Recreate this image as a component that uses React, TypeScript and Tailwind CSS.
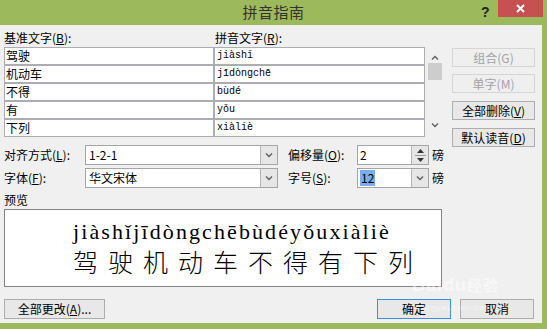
import React from "react";

const ui = { fontFamily: '"Noto Sans CJK SC", "Noto Sans", sans-serif' };
const mono = { fontFamily: '"Liberation Mono", "DejaVu Sans Mono", monospace' };

const rows = [
    ["驾驶", "jiàshǐ"],
    ["机动车", "jīdòngchē"],
    ["不得", "bùdé"],
    ["有", "yǒu"],
    ["下列", "xiàliè"],
];

const chars = ["驾", "驶", "机", "动", "车", "不", "得", "有", "下", "列"];

function Chevron({ up = false, color = "#606060" }: { up?: boolean; color?: string }) {
    return (
        <svg width="8" height="5" viewBox="0 0 8 5">
            <path d={up ? "M1 4.5 L4 1.5 L7 4.5" : "M1 0.5 L4 3.5 L7 0.5"} fill="none" stroke={color} strokeWidth="1.4" />
        </svg>
    );
}

function Btn({ label, keyChar, after = "", disabled = false, primary = false, w = "w-[83px]", h = "h-[19px]" }: { label: string; keyChar: string; after?: string; disabled?: boolean; primary?: boolean; w?: string; h?: string }) {
    return (
        <div className={`${w} ${h} flex items-center justify-center text-[12px] leading-[16px] border ${disabled ? "border-[#d5d5d5] text-[#a3a3a3] bg-[#efefef]" : primary ? "border-[#3c8ce0] bg-[#e8e8e8] text-black" : "border-[#adadad] bg-[#e8e8e8] text-black"}`}>
            {label}
            {keyChar && <>(<span className={disabled ? "" : "underline"}>{keyChar}</span>){after}</>}
        </div>
    );
}

function Combo({ value, w, selected = false }: { value: string; w: string; selected?: boolean }) {
    return (
        <div className={`${w} h-[20px] flex border border-[#a5a5a5] bg-white`}>
            <div className="flex-1 flex items-center pl-[2px] text-[12px] leading-[16px]">
                <span className={selected ? "bg-[#78aeea] px-[1px]" : "px-[1px]"}>{value}</span>
            </div>
            <div className="w-[17px] border-l border-[#b5b5b5] bg-[#e6e6e6] flex items-center justify-center">
                <Chevron />
            </div>
        </div>
    );
}

export default function App() {
    return (
        <div className="w-[547px] h-[329px] bg-[#9cba5b] flex flex-col overflow-hidden text-black" style={ui}>
            {/* title bar */}
            <div className="relative h-[25px] shrink-0 flex items-center justify-center">
                <span className="text-[15px] leading-[20px] text-[#333] tracking-[0.5px] -mt-[1px]">拼音指南</span>
                <span className="absolute left-[481px] top-[2px] text-[14px] font-bold text-[#222]" style={{ fontFamily: '"Liberation Sans", sans-serif' }}>?</span>
                <div className="absolute left-[498px] top-0 w-[45px] h-[17px] bg-[#c75050] flex items-center justify-center">
                    <svg width="9" height="9" viewBox="0 0 9 9">
                        <path d="M1 1 L8 8 M8 1 L1 8" stroke="#fff" strokeWidth="2" />
                    </svg>
                </div>
            </div>

            {/* dialog body */}
            <div className="relative mr-[5px] h-[298px] shrink-0 bg-[#f0f0f0] pl-[4px]">
                <div className="flex items-start h-[112px]">
                    <div className="w-[438px]">
                        <div className="h-[22px] pt-[5px] flex text-[12px] leading-[16px]">
                            <span className="w-[211px]">基准文字(<span className="underline">B</span>):</span>
                            <span>拼音文字(<span className="underline">R</span>):</span>
                        </div>
                        <div className="flex">
                            <div className="flex flex-col">
                                {rows.map(([han, py]) => (
                                    <div key={han} className="flex">
                                        <div className="w-[210px] h-[18px] border border-[#abadb3] bg-white pl-[1px] text-[12px] leading-[16px]">{han}</div>
                                        <div className="w-[211px] h-[18px] border border-[#abadb3] bg-white pl-[2px] text-[10px] leading-[16px]" style={mono}>{py}</div>
                                    </div>
                                ))}
                            </div>
                            <div className="ml-[3px] w-[14px] h-[90px] flex flex-col items-center">
                                <div className="h-[16px] flex items-end pb-[3px]"><Chevron up /></div>
                                <div className="w-[14px] h-[17px] bg-[#cdcdcd]" />
                                <div className="flex-1" />
                                <div className="h-[16px] flex items-start pt-[2px]"><Chevron /></div>
                            </div>
                        </div>
                    </div>
                    <div className="ml-[10px] pt-[23px] flex flex-col">
                        <Btn label="组合" keyChar="G" disabled />
                        <div className="mt-[7px]"><Btn label="单字" keyChar="M" disabled /></div>
                        <div className="mt-[8px]"><Btn label="全部删除" keyChar="V" /></div>
                        <div className="mt-[8px]"><Btn label="默认读音" keyChar="D" /></div>
                    </div>
                </div>

                {/* option rows */}
                <div className="mt-[7px] h-[22px] flex items-center text-[12px] leading-[16px]">
                    <span className="w-[81px]">对齐方式(<span className="underline">L</span>):</span>
                    <Combo value="1-2-1" w="w-[193px]" />
                    <span className="ml-[10px] w-[69px]">偏移量(<span className="underline">O</span>):</span>
                    <div className="w-[72px] h-[20px] flex border border-[#a5a5a5] bg-white">
                        <div className="flex-1 pl-[2px] leading-[18px]">2</div>
                        <div className="w-[17px] border-l border-[#b5b5b5] bg-[#e6e6e6] flex flex-col items-center justify-center gap-[2px]">
                            <svg width="7" height="4" viewBox="0 0 7 4"><path d="M0 4 L3.5 0 L7 4 Z" fill="#333" /></svg>
                            <div className="w-[11px] h-px bg-[#9a9a9a]" />
                            <svg width="7" height="4" viewBox="0 0 7 4"><path d="M0 0 L3.5 4 L7 0 Z" fill="#333" /></svg>
                        </div>
                    </div>
                    <span className="ml-[3px]">磅</span>
                </div>
                <div className="mt-px h-[22px] flex items-center text-[12px] leading-[16px]">
                    <span className="w-[81px]">字体(<span className="underline">F</span>):</span>
                    <Combo value="华文宋体" w="w-[193px]" />
                    <span className="ml-[10px] w-[69px]">字号(<span className="underline">S</span>):</span>
                    <Combo value="12" w="w-[72px]" selected />
                    <span className="ml-[3px]">磅</span>
                </div>

                {/* preview */}
                <div className="mt-[3px] text-[12px] leading-[16px]">预览</div>
                <div className="mt-px w-[438px] h-[78px] border border-[#838383] bg-white pl-[68px] pt-[9px]">
                    <div className="text-[22px] leading-[26px] tracking-[2.1px] whitespace-nowrap" style={{ fontFamily: '"Liberation Serif", "DejaVu Serif", serif' }}>
                        jiàshǐjīdòngchēbùdéyǒuxiàliè
                    </div>
                    <div className="mt-[2px] flex text-[25px] leading-[28px] font-light">
                        {chars.map((c) => (
                            <span key={c} className="w-[35px] shrink-0">{c}</span>
                        ))}
                    </div>
                </div>

                {/* bottom buttons */}
                <div className="mt-[12px] flex">
                    <Btn label="全部更改" keyChar="A" after="..." w="w-[101px]" h="h-[20px]" />
                    <div className="ml-[272px]"><Btn label="确定" keyChar="" primary w="w-[74px]" h="h-[20px]" /></div>
                    <div className="ml-[9px]"><Btn label="取消" keyChar="" w="w-[74px]" h="h-[20px]" /></div>
                </div>

                {/* watermark */}
                <div className="absolute left-[412px] top-[250px] text-white/50 pointer-events-none" style={{ fontFamily: '"Liberation Sans", sans-serif' }}>
                    <div className="text-[18px] font-bold leading-[20px] tracking-[1px]">Baidu<span className="text-[15px]" style={ui}>经验</span></div>
                    <div className="text-[8px] leading-[10px] ml-[12px] mt-[8px]">jingyan.baidu.com</div>
                </div>
            </div>
        </div>
    );
}
